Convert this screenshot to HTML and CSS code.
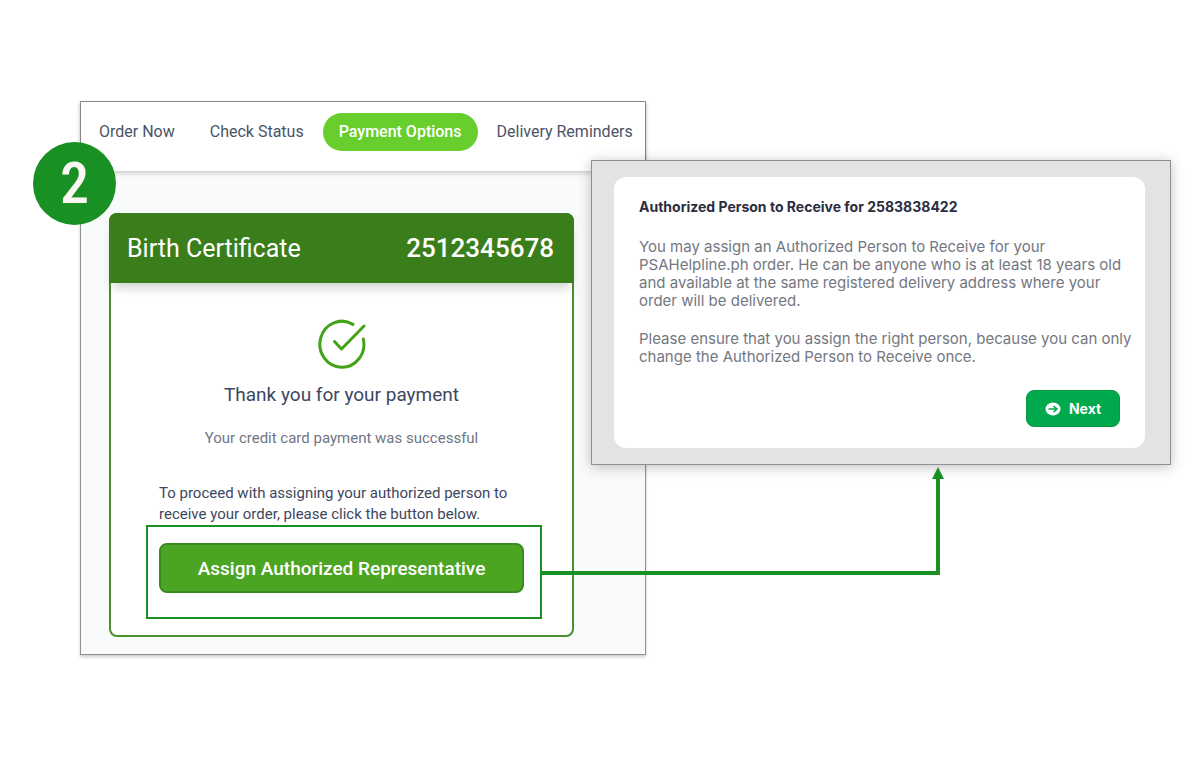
FILE: index.html
```html
<!DOCTYPE html>
<html lang="en">
<head>
	<meta charset="UTF-8">
	<title>Payment Options</title>
	<link rel="stylesheet" href="styles.css">
</head>
<body>
	<div id="wrapper">
		<div class="panel">
			<span class="step">2</span>
			<nav class="nav">
				<a href="#">Order Now</a>
				<a href="#">Check Status</a>
				<a href="#" class="active">Payment Options</a>
				<a href="#">Delivery Reminders</a>
			</nav>
			<div class="content">
				<div class="card">
					<div class="card_head">
						<h1>Birth Certificate</h1>
						<span class="ref">2512345678</span>
					</div>
					<div class="card_body">
						<svg class="check" viewBox="0 0 48 50" width="48" height="50">
							<path d="M35 5.4A22 23 0 1 0 45.3 20"/>
							<path d="M16.5 22.5L23.5 30L46 7"/>
						</svg>
						<h2>Thank you for your payment</h2>
						<p class="paid">Your credit card payment was successful</p>
						<p class="tip">To proceed with assigning your authorized person to<br>receive your order, please click the button below.</p>
						<div class="highlight">
							<button type="button" class="assign">Assign Authorized Representative</button>
							<!-- arrow to the dialog -->
							<svg class="arrow" viewBox="0 0 402 108" width="402" height="108">
								<path class="line" d="M0 106H398V10"/>
								<path class="tip_head" d="M398 0L404 12H392Z"/>
							</svg>
						</div>
					</div>
				</div>
			</div>
		</div>
		<div class="dialog_bg">
			<div class="dialog">
				<h3>Authorized Person to Receive for 2583838422</h3>
				<p>You may assign an Authorized Person to Receive for your<br>PSAHelpline.ph order. He can be anyone who is at least 18 years old<br>and available at the same registered delivery address where your<br>order will be delivered.</p>
				<p>Please ensure that you assign the right person, because you can only<br>change the Authorized Person to Receive once.</p>
				<button type="button" class="next">
					<svg viewBox="0 0 16 14" width="16" height="14">
						<ellipse cx="8" cy="7" rx="7.5" ry="6.5" fill="#fff"/>
						<path d="M3.5 7H11.5M8.5 4L12 7L8.5 10" fill="none" stroke="#00a94b" stroke-width="1.6"/>
					</svg>
					Next
				</button>
			</div>
		</div>
	</div>
</body>
</html>
```

FILE: styles.css
```css
*{
	box-sizing: border-box;
	margin: 0;
	padding: 0;
}
body{
	background: #fff;
	font-family: Roboto, "Liberation Sans", sans-serif;
	color: #3d4760;
}
button{
	font-family: inherit;
	cursor: pointer;
}
#wrapper{
	display: grid;
	grid-template-columns: minmax(0, 566fr) minmax(0, 525fr);
	align-items: start;
	padding: 101px 29px 40px 80px;
}
.panel{
	position: relative;
	border: 1px solid #8f9092;
	background: #f8fafc;
	box-shadow: 0 2px 3px rgba(0,0,0,0.2);
}
.step{
	position: absolute;
	top: 40px;
	left: -48px;
	width: 83px;
	height: 83px;
	border-radius: 50%;
	background: #189024;
	color: #fdf7f3;
	font-family: "Roboto Condensed", "Liberation Sans Narrow", "Liberation Sans", sans-serif;
	font-size: 58px;
	font-weight: 500;
	line-height: 83px;
	text-align: center;
}
.nav{
	display: flex;
	gap: 3px;
	padding: 11px 2px 20px;
	background: #fff;
	box-shadow: 0 2px 5px rgba(0,0,0,0.2);
}
.nav a{
	padding: 0 16px;
	border-radius: 19px;
	color: #4a5368;
	font-size: 16px;
	line-height: 38px;
	text-decoration: none;
	white-space: nowrap;
}
.nav a.active{
	background: #67ce2e;
	color: #fff;
	font-weight: 500;
}
.content{
	padding: 42px 71px 17px 28px;
}
.card{
	border: 2px solid #48912c;
	border-radius: 8px;
	background: #fff;
}
.card_head{
	display: flex;
	justify-content: space-between;
	align-items: center;
	height: 70px;
	margin: -2px -2px 0;
	padding: 0 20px 0 18px;
	border-radius: 8px 8px 0 0;
	background: #3a7e1c;
	box-shadow: 0 8px 12px -4px rgba(0,0,0,0.2);
	color: #fff;
}
.card_head h1{
	font-size: 25px;
	font-weight: 400;
}
.card_head .ref{
	font-size: 26px;
	font-weight: 500;
}
.card_body{
	padding: 36px 35px 16px;
	text-align: center;
}
.check{
	display: block;
	margin: 0 auto;
	fill: none;
	stroke: #43a318;
	stroke-width: 3;
	stroke-linecap: round;
	stroke-linejoin: round;
}
.card_body h2{
	margin-top: 12px;
	font-size: 19px;
	font-weight: 400;
	line-height: 28px;
}
.paid{
	margin-top: 18px;
	color: #6f7686;
	font-size: 15px;
	line-height: 22px;
}
.tip{
	margin: 34px 0 0 13px;
	font-size: 15px;
	line-height: 21px;
	text-align: left;
	white-space: nowrap;
}
.highlight{
	position: relative;
	margin-right: -5px;
	padding: 16px 16px 24px 11px;
	border: 2px solid #189024;
}
.assign{
	width: 100%;
	height: 50px;
	border: 2px solid #3c8a1e;
	border-radius: 8px;
	background: #4ba523;
	color: #fff;
	font-size: 19px;
	font-weight: 500;
}
.arrow{
	position: absolute;
	left: 100%;
	bottom: 42px;
	z-index: 3;
	overflow: visible;
}
.arrow .line{
	fill: none;
	stroke: #189024;
	stroke-width: 4;
}
.arrow .tip_head{
	fill: #189024;
}
.dialog_bg{
	position: relative;
	margin: 59px 0 0 -55px;
	padding: 16px 25px 16px 22px;
	border: 1px solid #8f9092;
	background: #e3e3e5;
	box-shadow: 0 2px 12px rgba(0,0,0,0.25);
}
.dialog{
	padding: 21px 25px;
	border-radius: 12px;
	background: #fff;
	color: #74777f;
	font-family: Inter, "Liberation Sans", sans-serif;
	font-size: 15px;
	line-height: 18px;
}
.dialog h3{
	margin-bottom: 22px;
	color: #2b2d3e;
	font-size: 14px;
	font-weight: 700;
}
.dialog p{
	margin-bottom: 20px;
	white-space: nowrap;
}
.next{
	display: flex;
	align-items: center;
	justify-content: center;
	gap: 8px;
	width: 94px;
	height: 37px;
	margin: 24px 0 0 auto;
	border: 1px solid #049a42;
	border-radius: 8px;
	background: #00a94b;
	color: #fff;
	font-size: 14px;
	font-weight: 700;
}
```
